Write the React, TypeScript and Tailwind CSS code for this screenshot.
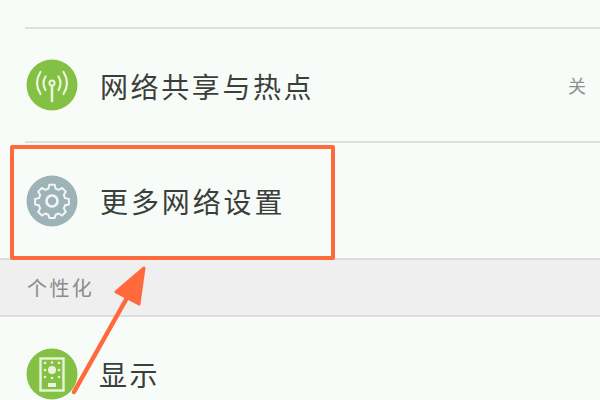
export default function App() {
  const font = { fontFamily: '"Noto Sans CJK SC", sans-serif' };
  return (
    <div className="relative w-[600px] h-[400px] overflow-hidden bg-[#f8fcf8] flex flex-col" style={font}>
      <div className="h-[29px] shrink-0 ml-[25px] border-b-2 border-[#dcdfdc]" />
      <div className="h-[114px] shrink-0 ml-[25px] border-b-2 border-[#dcdfdc] flex items-center">
        <svg width="52" height="52" viewBox="0 0 52 52" className="shrink-0 mt-[-1px] ml-[1px]">
          <circle cx="26" cy="26" r="25.5" fill="#84c043" />
          <g fill="none" stroke="#e9f5da" strokeLinecap="round">
            <path d="M26 27V42" strokeWidth="2.6" />
            <circle cx="26" cy="24" r="2.6" strokeWidth="2" />
            <path d="M19.5 17.5Q15.5 24 19.5 31M32.5 17.5Q36.5 24 32.5 31" strokeWidth="2.2" />
            <path d="M14.5 13Q7.5 24 14.5 35M37.5 13Q44.5 24 37.5 35" strokeWidth="2.2" />
          </g>
        </svg>
        <span className="ml-[22px] mt-[1px] text-[28px] leading-none tracking-[2.6px] text-[#3b3f3c]">网络共享与热点</span>
        <span className="ml-auto mr-[14px] text-[18px] leading-none text-[#8f928f]">关</span>
      </div>
      <div className="h-[115px] shrink-0 pl-[26px] flex items-center">
        <svg width="52" height="52" viewBox="0 0 52 52" className="shrink-0">
          <circle cx="26" cy="26" r="25.5" fill="#9eb3b7" />
          <g fill="none" stroke="#f1f6f6" strokeWidth="2.2" strokeLinejoin="round">
            <path d="M23 10.5h6l1 4.3 3.4 1.4 3.8-2.3 4.2 4.2-2.3 3.8 1.4 3.4 4.3 1v6l-4.3 1-1.4 3.4 2.3 3.8-4.2 4.2-3.8-2.3-3.4 1.4-1 3.6h-6l-1-3.6-3.4-1.4-3.8 2.3-4.2-4.2 2.3-3.8-1.4-3.4-4.3-1v-6l4.3-1 1.4-3.4-2.3-3.8 4.2-4.2 3.8 2.3 3.4-1.4z" transform="translate(26 26) scale(.9) translate(-26 -28.5)" />
            <circle cx="26" cy="26" r="5.5" strokeWidth="2.6" />
          </g>
        </svg>
        <span className="ml-[22px] text-[28px] leading-none tracking-[2.9px] text-[#3b3f3c]">更多网络设置</span>
      </div>
      <div className="h-[59px] shrink-0 bg-[#efefef] border-y-2 border-[#dcdcdc] flex items-center pl-[27px]">
        <span className="text-[20px] leading-none tracking-[2.4px] text-[#8a8c8a]">个性化</span>
      </div>
      <div className="flex-1 pl-[26px] pt-[31px] flex items-start">
        <svg width="52" height="52" viewBox="0 0 52 52" className="shrink-0">
          <circle cx="26" cy="26" r="25.5" fill="#84c043" />
          <rect x="14.5" y="10.5" width="23" height="32" fill="none" stroke="#e9f5da" strokeWidth="2.4" />
          <circle cx="26" cy="22" r="4" fill="#e9f5da" />
          <g fill="#e9f5da">
            <circle cx="19" cy="15" r="1.3" /><circle cx="26" cy="14.5" r="1.3" /><circle cx="33" cy="15" r="1.3" />
            <circle cx="19" cy="22" r="1.3" /><circle cx="33" cy="22" r="1.3" />
            <circle cx="19" cy="29" r="1.3" /><circle cx="26" cy="30" r="1.3" /><circle cx="33" cy="29" r="1.3" />
            <rect x="22" y="35" width="8" height="4" />
          </g>
        </svg>
        <span className="ml-[21px] mt-[12px] text-[28px] leading-none tracking-[2.4px] text-[#3b3f3c]">显示</span>
      </div>
      <div className="absolute left-[10px] top-[145px] w-[325px] h-[115px] border-[4px] border-[#ff6a3c] rounded-[2px]" />
      <svg className="absolute left-0 top-0" width="600" height="400" viewBox="0 0 600 400">
        <path d="M74 392L128 296" stroke="#ff6a3c" strokeWidth="4.5" strokeLinecap="round" fill="none" />
        <path d="M144 268L116 292L139 304Z" fill="#ff6a3c" stroke="#ff6a3c" strokeWidth="3" strokeLinejoin="round" />
      </svg>
    </div>
  );
}
